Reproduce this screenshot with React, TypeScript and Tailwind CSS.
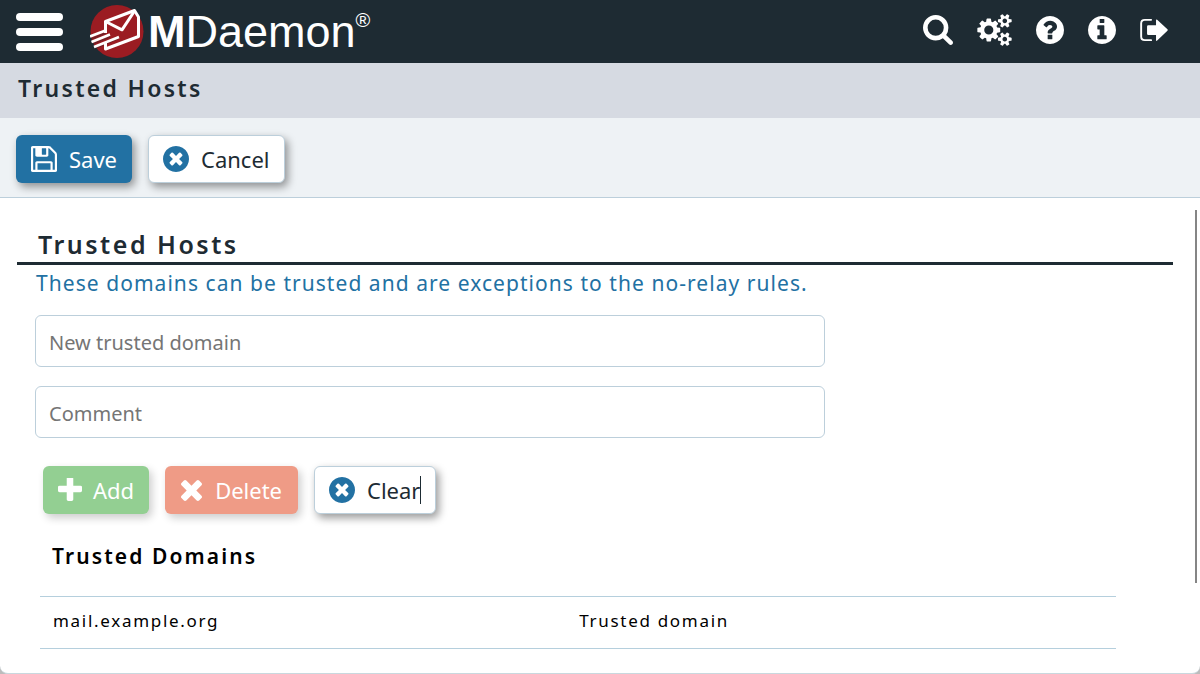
import type { ReactNode } from "react";

const DISC =
  "M1664 896q0 209-103 385.5t-279.5 279.5-385.5 103-385.5-103-279.5-279.5-103-385.5 103-385.5 279.5-279.5 385.5-103 385.5 103 279.5 279.5 103 385.5z";

// Relative outline shared by both small gears of the settings icon.
const SMALL_GEAR =
  "v140q0 16-149 31-12 27-30 52 51 113 51 138 0 4-4 7-122 71-124 71-8 0-46-47t-52-68q-20 2-30 2t-30-2q-14 21-52 68t-46 47q-2 0-124-71-4-3-4-7 0-25 51-138-18-25-30-52-149-15-149-31v-140q0-16 149-31 13-29 30-52-51-113-51-138 0-4 4-7 4-2 35-20t59-34 30-16q8 0 46 46.5t52 67.5q20-2 30-2t30 2q51-71 92-112l6-2q4 0 124 70 4 3 4 7 0 25-51 138 17 23 30 52 149 15 149 31z";

const PATHS = {
  search:
    "M1216 832q0-185-131.5-316.5t-316.5-131.5-316.5 131.5-131.5 316.5 131.5 316.5 316.5 131.5 316.5-131.5 131.5-316.5zm512 832q0 52-38 90t-90 38q-54 0-90-38l-343-342q-179 124-399 124-143 0-273.5-55.5t-225-150-150-225-55.5-273.5 55.5-273.5 150-225 225-150 273.5-55.5 273.5 55.5 225 150 150 225 55.5 273.5q0 220-124 399l343 343q37 37 37 90z",
  cogs:
    "M960 896q0-106-75-181t-181-75-181 75-75 181 75 181 181 75 181-75 75-181zm768 512q0-52-38-90t-90-38-90 38-38 90q0 53 37.5 90.5t90.5 37.5 90.5-37.5 37.5-90.5zm0-1024q0-52-38-90t-90-38-90 38-38 90q0 53 37.5 90.5t90.5 37.5 90.5-37.5 37.5-90.5zm-384 421v185q0 10-7 19.5t-16 10.5l-155 24q-11 35-32 76 34 48 90 115 7 11 7 20 0 12-7 19-23 30-82.5 89.5t-78.5 59.5q-11 0-21-7l-115-90q-37 19-77 31-11 108-23 155-7 24-30 24h-186q-11 0-20-7.5t-10-17.5l-23-153q-34-10-75-31l-118 89q-7 7-20 7-11 0-21-8-144-133-144-160 0-9 7-19 10-14 41-53t47-61q-23-44-35-82l-152-24q-10-1-17-9.5t-7-19.5v-185q0-10 7-19.5t16-10.5l155-24q11-35 32-76-34-48-90-115-7-11-7-20 0-12 7-20 22-30 82-89t79-59q11 0 21 7l115 90q34-18 77-32 11-108 23-154 7-24 30-24h186q11 0 20 7.5t10 17.5l23 153q34 10 75 31l118-89q8-7 20-7 11 0 21 8 144 133 144 160 0 8-7 19-12 16-42 54t-45 60q23 48 34 82l152 23q10 2 17 10.5t7 19.5z" +
    "M1984 1338" + SMALL_GEAR + "M1984 314" + SMALL_GEAR,
  question:
    "M1024 1376v-192q0-14-9-23t-23-9h-192q-14 0-23 9t-9 23v192q0 14 9 23t23 9h192q14 0 23-9t9-23zm256-672q0-88-55.5-163t-138.5-116-170-41q-243 0-371 213-15 24 8 42l132 100q7 6 19 6 16 0 25-12 53-68 86-92 34-24 86-24 48 0 85.5 26t37.5 59q0 38-20 61t-68 45q-63 28-115.5 86.5t-52.5 125.5v36q0 14 9 23t23 9h192q14 0 23-9t9-23q0-19 21.5-49.5t54.5-49.5q32-18 49-28.5t46-35 44.5-48 28-60.5 12.5-81z" + DISC,
  info:
    "M1152 1376v-160q0-14-9-23t-23-9h-96v-512q0-14-9-23t-23-9h-320q-14 0-23 9t-9 23v160q0 14 9 23t23 9h96v320h-96q-14 0-23 9t-9 23v160q0 14 9 23t23 9h448q14 0 23-9t9-23zm-128-896v-160q0-14-9-23t-23-9h-192q-14 0-23 9t-9 23v160q0 14 9 23t23 9h192q14 0 23-9t9-23z" + DISC,
  save:
    "M512 1536h768v-384h-768v384zm896 0h128v-896q0-14-10-38.5t-20-34.5l-281-281q-10-10-34-20t-39-10v416q0 40-28 68t-68 28h-576q-40 0-68-28t-28-68v-416h-128v1280h128v-416q0-40 28-68t68-28h832q40 0 68 28t28 68v416zm-384-928v-320q0-13-9.5-22.5t-22.5-9.5h-192q-13 0-22.5 9.5t-9.5 22.5v320q0 13 9.5 22.5t22.5 9.5h192q13 0 22.5-9.5t9.5-22.5zm640 32v928q0 40-28 68t-68 28h-1344q-40 0-68-28t-28-68v-1344q0-40 28-68t68-28h928q40 0 88 20t76 48l280 280q28 28 48 76t20 88z",
  timesCircle:
    "M1277 1122q0-26-19-45l-181-181 181-181q19-19 19-45 0-27-19-46l-90-90q-19-19-46-19-26 0-45 19l-181 181-181-181q-19-19-45-19-27 0-46 19l-90 90q-19 19-19 46 0 26 19 45l181 181-181 181q-19 19-19 45 0 27 19 46l90 90q19 19 46 19 26 0 45-19l181-181 181 181q19 19 45 19 27 0 46-19l90-90q19-19 19-46z" + DISC,
  plus:
    "M1600 736v192q0 40-28 68t-68 28h-416v416q0 40-28 68t-68 28h-192q-40 0-68-28t-28-68v-416h-416q-40 0-68-28t-28-68v-192q0-40 28-68t68-28h416v-416q0-40 28-68t68-28h192q40 0 68 28t28 68v416h416q40 0 68 28t28 68z",
  times:
    "M1490 1322q0 40-28 68l-136 136q-28 28-68 28t-68-28l-294-294-294 294q-28 28-68 28t-68-28l-136-136q-28-28-28-68t28-68l294-294-294-294q-28-28-28-68t28-68l136-136q28-28 68-28t68 28l294 294 294-294q28-28 68-28t68 28l136 136q28 28 28 68t-28 68l-294 294 294 294q28 28 28 68z",
};

function Icon({ name, box, className }: { name: keyof typeof PATHS; box: string; className: string }) {
  return (
    <svg viewBox={box} fill="currentColor" fillRule="evenodd" className={className} aria-hidden="true">
      <path d={PATHS[name]} />
    </svg>
  );
}

function SignOutIcon() {
  return (
    <svg viewBox="0 0 29 24" className="h-6 w-7" aria-hidden="true">
      <path d="M11.5 1.5H5Q1.2 1.5 1.2 5.3v13.4q0 3.8 3.8 3.8h6.5" fill="none" stroke="currentColor" strokeWidth="2" strokeLinecap="round" />
      <path d="M8.6 7.2h8V2q0-1.4 1.2-.5L28.4 11.3q.7.7 0 1.4L17.8 23q-1.2.9-1.2-.5v-5.2h-8Q7.3 17.3 7.3 16V8.500q0-1.300 1.300-1.300z" fill="currentColor" />
    </svg>
  );
}

function LogoMark() {
  return (
    <svg viewBox="0 0 54 54" className="h-[54px] w-[54px]" aria-hidden="true">
      <circle cx="27" cy="26.5" r="26.5" fill="#9b1c22" />
      <path d="M0 34.500 15.500 28M1.500 39.500 20 31.800M4 44 29 33" stroke="#1e2b33" strokeWidth="1.500" fill="none" opacity=".35" />
      <g fill="none" stroke="#fff" strokeWidth="3" strokeLinejoin="round">
        <path d="M15.500 28V16.500L44.500 5.500l4 6.500v19.500L15.500 44v-7" />
        <path d="M15.500 16.500 32 24.800 44.500 6" />
      </g>
      <path d="M0 31.500 15.500 25.500M1.500 37 20 29.500M4 42 29 32" stroke="#fff" strokeWidth="2.600" fill="none" />
    </svg>
  );
}

const BUTTON = "flex h-12 items-center rounded-md text-[22px] leading-8";
const RAISED = "shadow-[3px_4px_8px_rgba(0,0,0,0.4)]";

function ActionButton({ icon, tone, children, disabled }: { icon: ReactNode; tone: string; children: ReactNode; disabled?: boolean }) {
  return (
    <button type="button" disabled={disabled} className={`${BUTTON} ${tone}`}>
      {icon}
      {children}
    </button>
  );
}

const OUTLINED = `border border-[#bccfdb] bg-white px-[14px] gap-3 text-[#1d2b33] ${RAISED}`;
const FIELD =
  "block h-[52px] w-full rounded-md border border-[#bccfdb] bg-white px-[13px] pt-0.5 text-xl text-black placeholder:text-[#757575] outline-none";

export default function App() {
  const crossBadge = <Icon name="timesCircle" box="128 128 1536 1536" className="size-[26px] text-[#2271a3]" />;

  return (
    <div className="min-h-screen bg-[#bcbcbc] font-['Noto_Sans',sans-serif]">
      <div className="flex min-h-screen flex-col overflow-hidden rounded-b-lg border-b border-[#c9d8de] bg-white">
        <header className="flex h-[63px] items-center justify-between bg-[#1e2b33] pl-4 pr-8 text-white">
          <div className="flex items-center">
            <button type="button" aria-label="Menu" className="flex w-[47px] flex-col gap-[7px]">
              <span className="h-2 rounded-sm bg-white" />
              <span className="h-2 rounded-sm bg-white" />
              <span className="h-2 rounded-sm bg-white" />
            </button>
            <a href="#home" className="ml-[27px] flex items-center font-['Liberation_Sans',Arial,sans-serif]">
              <LogoMark />
              <span className="ml-1 flex text-[45px] leading-[52px]">
                <b>M</b>
                <span>Daemon</span>
                <span className="text-xl leading-7">®</span>
              </span>
            </a>
          </div>
          <nav className="flex items-center gap-6 pb-1">
            <a href="#search" aria-label="Search">
              <Icon name="search" box="64 128 1664 1664" className="size-[30px]" />
            </a>
            <a href="#settings" aria-label="Settings">
              <Icon name="cogs" box="64 0 1920 1792" className="h-8 w-[35px]" />
            </a>
            <a href="#help" aria-label="Help">
              <Icon name="question" box="128 128 1536 1536" className="size-7" />
            </a>
            <a href="#about" aria-label="About">
              <Icon name="info" box="128 128 1536 1536" className="size-7" />
            </a>
            <a href="#signout" aria-label="Sign out">
              <SignOutIcon />
            </a>
          </nav>
        </header>

        <div className="flex h-[55px] items-center bg-[#d6dae2] px-[18px] pb-1">
          <h1 className="text-[23px] font-semibold tracking-widest text-[#1e2b33]">Trusted Hosts</h1>
        </div>

        <div className="flex h-20 items-center gap-4 border-b border-[#bccfdb] bg-[#eef2f5] px-4 pt-0.5">
          <ActionButton
            tone={`bg-[#2271a3] px-[15px] gap-3 text-white ${RAISED}`}
            icon={<Icon name="save" box="128 128 1536 1536" className="size-[26px]" />}
          >
            Save
          </ActionButton>
          <ActionButton tone={OUTLINED} icon={crossBadge}>
            Cancel
          </ActionButton>
        </div>

        <div className="flex flex-1 pr-[3px] pt-3">
          <main className="flex-1 pl-[17px] pr-[22px] pt-4">
            <h2 className="border-b-[3px] border-[#1e2b33] pl-[21px] text-[25px] leading-9 font-semibold tracking-widest text-[#1e2b33]">
              Trusted Hosts
            </h2>
            <p className="pl-[19px] pt-0.5 text-[21px] leading-8 tracking-wider text-[#2271a3]">
              These domains can be trusted and are exceptions to the no-relay rules.
            </p>

            <form className="ml-[18px] mt-4 max-w-[790px]">
              <input type="text" aria-label="New trusted domain" placeholder="New trusted domain" className={FIELD} />
              <input type="text" aria-label="Comment" placeholder="Comment" className={`mt-[19px] ${FIELD}`} />
              <div className="ml-2 mt-7 flex gap-4">
                <ActionButton
                  disabled
                  tone="bg-[#93cf92] px-[15px] gap-[11px] text-white shadow-[3px_4px_8px_rgba(0,0,0,0.2)]"
                  icon={<Icon name="plus" box="192 192 1408 1408" className="size-6" />}
                >
                  Add
                </ActionButton>
                <ActionButton
                  disabled
                  tone="bg-[#ef9b86] px-4 gap-[13px] text-white shadow-[3px_4px_8px_rgba(0,0,0,0.2)]"
                  icon={<Icon name="times" box="302 366 1188 1188" className="size-[21px]" />}
                >
                  Delete
                </ActionButton>
                <ActionButton tone={OUTLINED} icon={crossBadge}>
                  <span className="border-r border-[#1d2b33] leading-7">Clear</span>
                </ActionButton>
              </div>
            </form>

            <section className="ml-[23px] mr-[57px] mt-6">
              <h3 className="pl-3 text-[21px] leading-9 font-semibold tracking-widest text-black">Trusted Domains</h3>
              <table className="mt-[22px] w-full table-fixed border-collapse text-left text-[17px] tracking-widest text-black">
                <tbody>
                  <tr className="h-[52px] border-y border-[#b5cfdd]">
                    <td className="w-[49%] pb-1 pl-[13px]">mail.example.org</td>
                    <td className="pb-1 pl-3">Trusted domain</td>
                  </tr>
                </tbody>
              </table>
            </section>
          </main>
          <div className="h-[373px] w-[2px] bg-[#858585]" />
        </div>
      </div>
    </div>
  );
}
